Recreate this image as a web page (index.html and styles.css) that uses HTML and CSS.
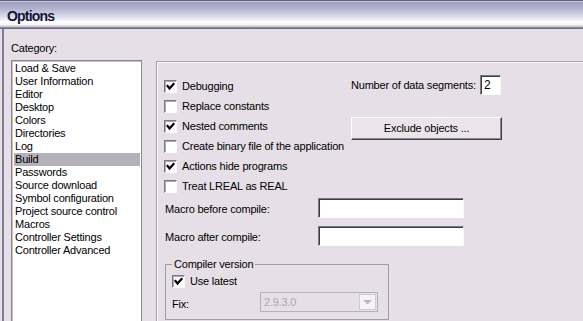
FILE: index.html
```html
<!DOCTYPE html>
<html>
<head>
<meta charset="utf-8">
<title>Options</title>
<link rel="stylesheet" href="styles.css">
</head>
<body>
<div class="window">
  <div class="titlebar"><span class="title">Options</span></div>
  <div class="frame">
    <div class="side">
      <div class="cat-label">Category:</div>
      <ul class="list">
        <li>Load &amp; Save</li>
        <li>User Information</li>
        <li>Editor</li>
        <li>Desktop</li>
        <li>Colors</li>
        <li>Directories</li>
        <li>Log</li>
        <li class="selected">Build</li>
        <li>Passwords</li>
        <li>Source download</li>
        <li>Symbol configuration</li>
        <li>Project source control</li>
        <li>Macros</li>
        <li>Controller Settings</li>
        <li>Controller Advanced</li>
      </ul>
    </div>
    <div class="panel">
      <div class="top">
        <div class="checks">
          <div class="check"><span class="box"><svg class="tick" width="11" height="11" viewBox="0 0 11 11"><path d="M2.5 5 L4.5 7.5 L8.5 3" /></svg></span>Debugging</div>
          <div class="check"><span class="box"></span>Replace constants</div>
          <div class="check"><span class="box"><svg class="tick" width="11" height="11" viewBox="0 0 11 11"><path d="M2.5 5 L4.5 7.5 L8.5 3" /></svg></span>Nested comments</div>
          <div class="check"><span class="box"></span>Create binary file of the application</div>
          <div class="check"><span class="box"><svg class="tick" width="11" height="11" viewBox="0 0 11 11"><path d="M2.5 5 L4.5 7.5 L8.5 3" /></svg></span>Actions hide programs</div>
          <div class="check"><span class="box"></span>Treat LREAL as REAL</div>
        </div>
        <div class="extras">
          <div class="segments"><span class="seg-label">Number of data segments:</span><span class="field small">2</span></div>
          <div class="button">Exclude objects ...</div>
        </div>
      </div>
      <div class="macro-row"><span class="macro-label">Macro before compile:</span><span class="field wide"></span></div>
      <div class="macro-row second"><span class="macro-label">Macro after compile:</span><span class="field wide"></span></div>
      <fieldset class="group">
        <legend>Compiler version</legend>
        <div class="check"><span class="box"><svg class="tick" width="11" height="11" viewBox="0 0 11 11"><path d="M2.5 5 L4.5 7.5 L8.5 3" /></svg></span>Use latest</div>
        <div class="fix-row">
          <span class="fix-label">Fix:</span>
          <div class="combo">
            <span class="combo-text">2.9.3.0</span>
            <span class="combo-btn"><svg width="9" height="5" viewBox="0 0 9 5"><path d="M0 0 H9 L4.5 4.5 Z" /></svg></span>
          </div>
        </div>
      </fieldset>
    </div>
  </div>
</div>
</body>
</html>
```
FILE: styles.css
```css
html, body {
  margin: 0;
  padding: 0;
}
body {
  width: 583px;
  height: 321px;
  overflow: hidden;
  background: #e7dfe7;
  font-family: "Liberation Sans", Arial, sans-serif;
  font-size: 11px;
  letter-spacing: -0.2px;
  color: #000;
}
.window {
  width: 583px;
  height: 321px;
}
.titlebar {
  height: 29px;
  box-sizing: border-box;
  padding: 8px 0 0 7px;
  background: linear-gradient(to bottom,
    #5e5e78 0, #5e5e78 1px,
    #cacada 1px, #cacada 2px,
    #9c9cbe 2px, #b4b4cf 9px,
    #e4e4ee 18px, #ffffff 22px,
    #f2f2f6 25px, #b4b4c2 27px,
    #6c6c84 28px, #6c6c84 29px);
}
.title {
  display: block;
  font-weight: bold;
  font-size: 14px;
  line-height: 16px;
  letter-spacing: -0.8px;
  color: #14143a;
}
.frame {
  display: flex;
  align-items: flex-start;
  margin-left: 2px;
  border-left: 2px solid #7e7c8e;
  padding-left: 7px;
  height: 292px;
}
.side {
  width: 131px;
  flex: none;
  padding-top: 13px;
}
.cat-label {
  line-height: 13px;
  margin-bottom: 5px;
}
.list {
  margin: 0;
  padding: 1px 0 0 0;
  list-style: none;
  height: 300px;
  background: #fff;
  border: 1px solid #8a8792;
  box-shadow: inset 1px 1px 0 #c4c0c8;
}
.list li {
  line-height: 13px;
  height: 13px;
  margin: 0 1px 0 2px;
  padding-left: 1px;
  white-space: nowrap;
}
.list li.selected {
  background: #b4b1b9;
}
.panel {
  flex: none;
  margin-left: 14px;
  margin-top: 32px;
  width: 520px;
  height: 400px;
  border: 1px solid #a6a2ab;
  box-shadow: inset 1px 1px 0 #fbf8fb;
  padding: 13px 0 0 7px;
}
.top {
  display: flex;
  align-items: flex-start;
}
.checks {
  width: 187px;
  margin-top: 5px;
  display: flex;
  flex-direction: column;
  gap: 7px;
}
.check {
  display: flex;
  align-items: flex-start;
  height: 13px;
  line-height: 13px;
  white-space: nowrap;
}
.box {
  flex: none;
  width: 13px;
  height: 13px;
  box-sizing: border-box;
  margin-right: 5px;
  background: #fff;
  border: 1px solid;
  border-color: #7c7882 #fbf9fb #fbf9fb #7c7882;
  box-shadow: inset 1px 1px 0 #aeaab4;
  display: flex;
  align-items: center;
  justify-content: center;
}
.tick path {
  fill: none;
  stroke: #000;
  stroke-width: 2.2;
  stroke-linecap: square;
}
.extras {
  display: flex;
  flex-direction: column;
}
.segments {
  display: flex;
  align-items: center;
  height: 20px;
}
.seg-label {
  width: 129px;
  line-height: 13px;
}
.field {
  display: block;
  box-sizing: border-box;
  background: #fff;
  border: 1px solid;
  border-color: #7c7882 #fbf9fb #fbf9fb #7c7882;
  box-shadow: inset 1px 1px 0 #3e3c42;
  line-height: 16px;
}
.field.small {
  width: 21px;
  height: 20px;
  padding: 1px 0 0 3px;
  font-size: 12px;
}
.button {
  margin-top: 22px;
  width: 151px;
  height: 23px;
  box-sizing: border-box;
  border: 1px solid;
  border-color: #ffffff #404044 #404044 #ffffff;
  box-shadow: inset -1px -1px 0 #8c8892;
  background: #ebe5eb;
  display: flex;
  align-items: center;
  justify-content: center;
  line-height: 13px;
}
.macro-row {
  display: flex;
  align-items: flex-start;
  height: 20px;
  margin-top: 5px;
}
.macro-row.second {
  margin-top: 8px;
}
.macro-label {
  width: 153px;
  padding: 5px 0 0 1px;
  line-height: 13px;
}
.field.wide {
  width: 146px;
  height: 20px;
}
.group {
  margin: 12px 0 0 1px;
  width: 224px;
  box-sizing: border-box;
  min-width: 0;
  padding: 4px 6px 7px 6px;
  border: 1px solid #a09ca6;
}
.group legend {
  padding: 0 2px 0 2px;
  line-height: 13px;
}
.fix-row {
  display: flex;
  align-items: flex-start;
  margin-top: 4px;
  height: 20px;
}
.fix-label {
  width: 88px;
  padding-top: 6px;
  line-height: 13px;
}
.combo {
  width: 118px;
  height: 20px;
  box-sizing: border-box;
  border: 1px solid #b6b2ba;
  padding: 1px;
  display: flex;
  align-items: center;
  background: #e7dfe7;
}
.combo-text {
  flex: 1;
  padding-left: 2px;
  color: #aba7b0;
  line-height: 13px;
}
.combo-btn {
  width: 17px;
  height: 16px;
  box-sizing: border-box;
  border: 1px solid #cfcbd3;
  background: #f6f3f6;
  display: flex;
  align-items: center;
  justify-content: center;
}
.combo-btn path {
  fill: #bcb8c0;
}
```
